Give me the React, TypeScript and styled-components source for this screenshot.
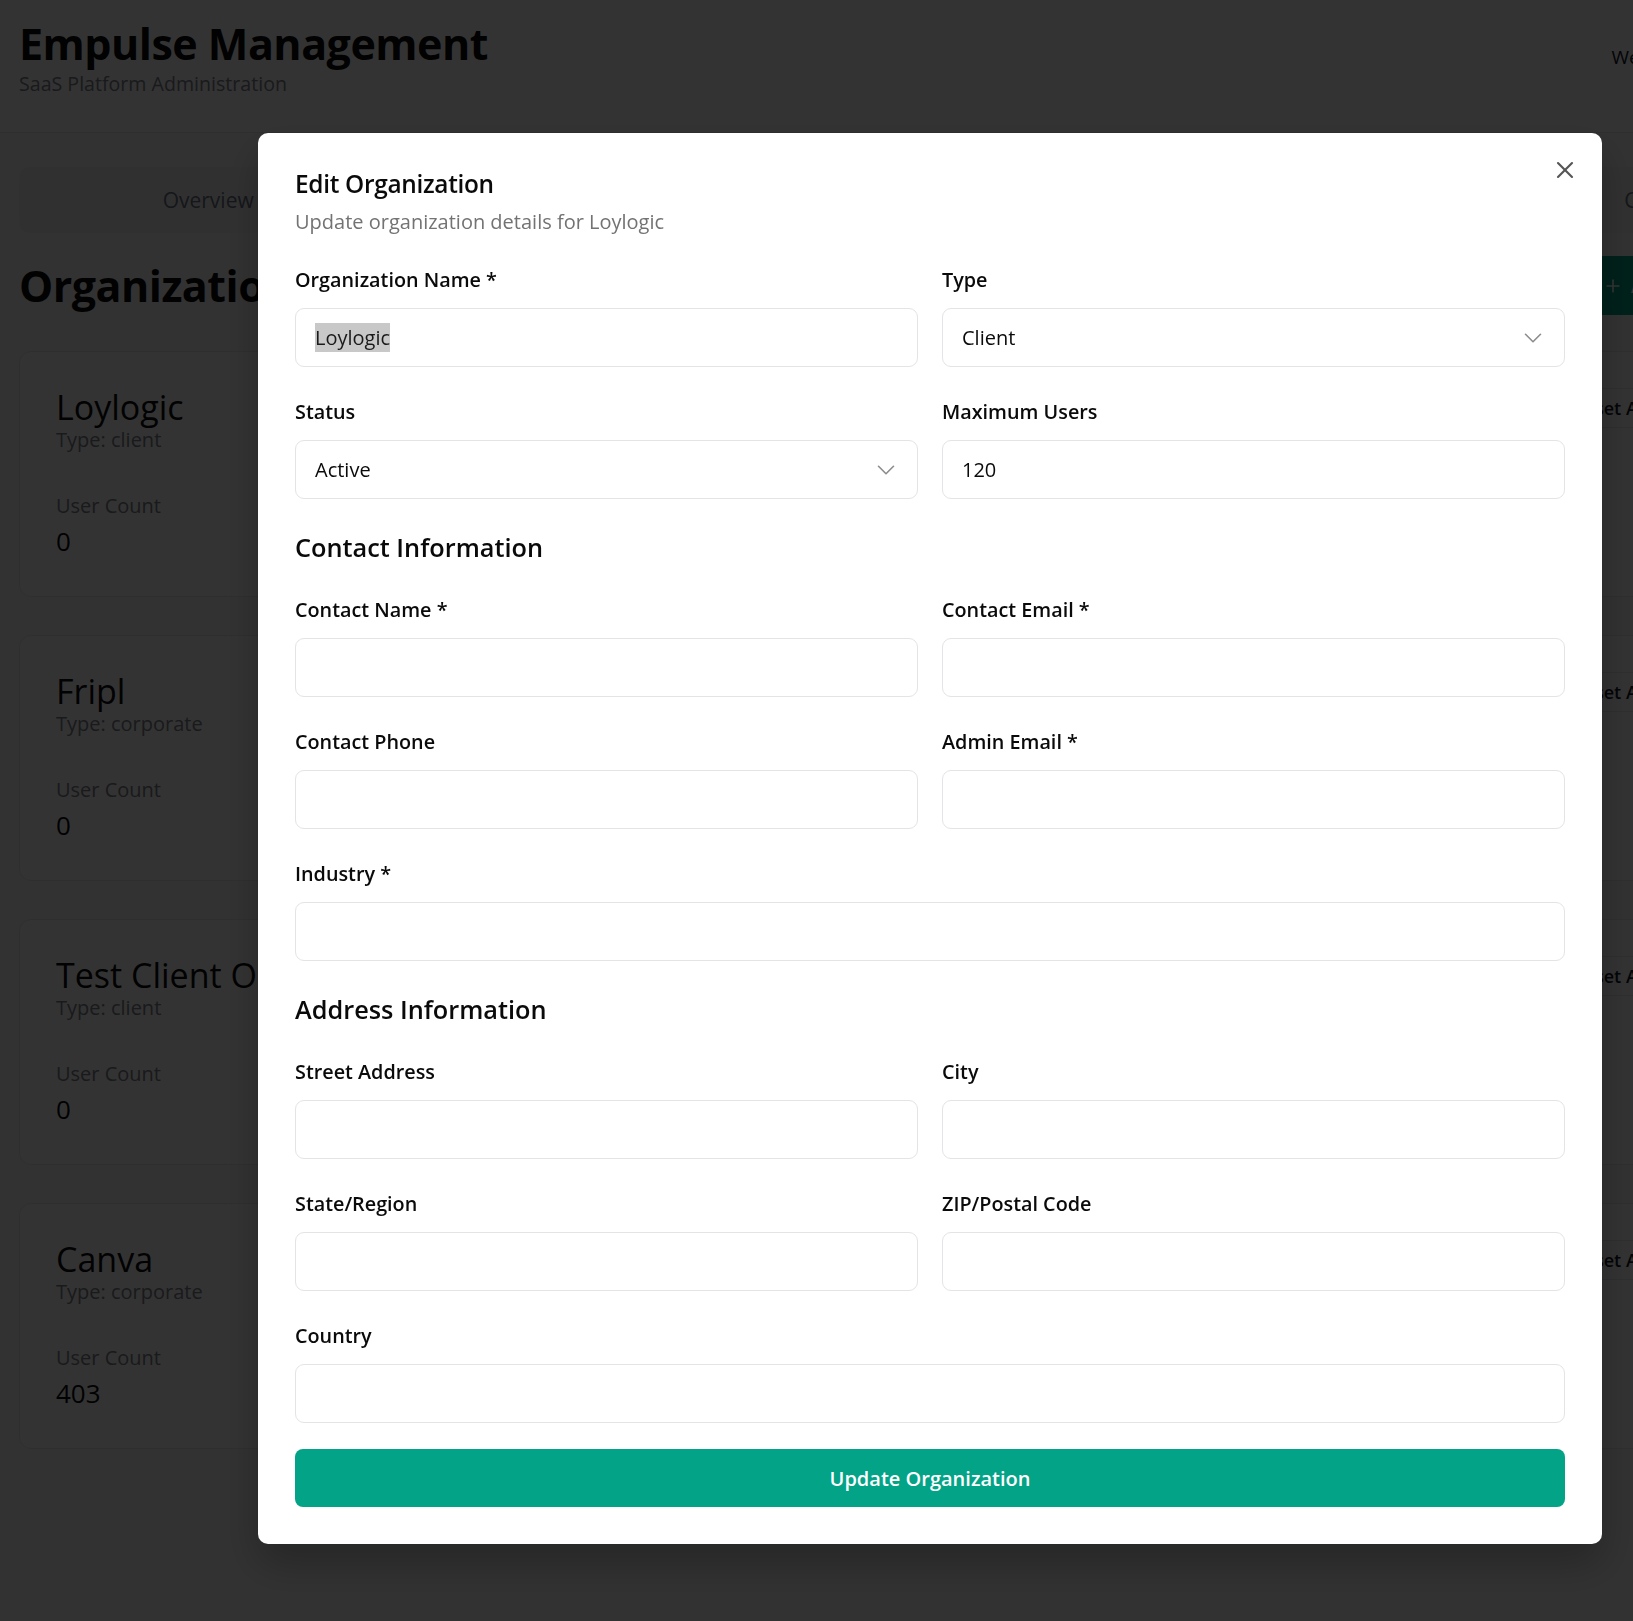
import styled, { createGlobalStyle } from "styled-components";
import { X, ChevronDown, Plus, KeyRound, Pencil } from "lucide-react";

const GlobalStyle = createGlobalStyle`
  html, body {
    margin: 0;
    padding: 0;
  }
  body {
    width: 1633px;
    height: 1621px;
    overflow: hidden;
    background: #ffffff;
    font-family: "Open Sans", "Noto Sans", sans-serif;
    color: #0a0a0a;
  }
  * {
    box-sizing: border-box;
  }
`;

/* ---------- page behind the dialog ---------- */

const Page = styled.div`
  width: 1890px;
  min-height: 1621px;
  background: #f9fafb;
`;

const Header = styled.header`
  height: 133px;
  background: #ffffff;
  border-bottom: 1px solid #e5e7eb;
  display: flex;
  justify-content: space-between;
  align-items: flex-start;
  padding: 20px 19px 0;
`;

const Brand = styled.div`
  display: flex;
  flex-direction: column;
  gap: 2px;
`;

const BrandTitle = styled.h1`
  margin: 0;
  font-size: 43px;
  line-height: 48px;
  font-weight: 700;
  letter-spacing: -0.5px;
  color: #0a0a0a;
`;

const BrandSub = styled.p`
  margin: 0;
  font-size: 19.6px;
  line-height: 28px;
  color: #7d828b;
`;

const UserArea = styled.div`
  display: flex;
  align-items: center;
  gap: 16px;
  padding-top: 17px;
  font-size: 19px;
  color: #111827;
`;

const GhostButton = styled.button<{ $icon?: boolean }>`
  height: 40px;
  padding: ${(p) => (p.$icon ? "0 10px" : "0 16px")};
  border: 1px solid #e5e7eb;
  border-radius: 8px;
  background: #ffffff;
  font-family: inherit;
  font-size: 18px;
  font-weight: 600;
  color: #111827;
  display: inline-flex;
  align-items: center;
  gap: 8px;
`;

const Main = styled.main`
  padding: 34px 19px 40px;
  display: flex;
  flex-direction: column;
`;

const TabList = styled.div`
  height: 66px;
  padding: 5px;
  border-radius: 10px;
  background: #f1f1f3;
  display: grid;
  grid-template-columns: repeat(5, 1fr);
`;

const Tab = styled.div<{ $active?: boolean }>`
  display: flex;
  align-items: center;
  justify-content: center;
  border-radius: 8px;
  font-size: 21px;
  color: ${(p) => (p.$active ? "#0a0a0a" : "#6b7280")};
  background: ${(p) => (p.$active ? "#ffffff" : "transparent")};
`;

const SectionHead = styled.div`
  margin-top: 23px;
  height: 59px;
  display: flex;
  align-items: center;
  justify-content: space-between;
`;

const PageTitle = styled.h2`
  margin: 0;
  font-size: 43px;
  font-weight: 700;
  letter-spacing: -0.5px;
`;

const PrimaryButton = styled.button`
  height: 59px;
  padding: 0 34px 0 26px;
  border: none;
  border-radius: 8px;
  background: #02a386;
  color: #ffffff;
  font-family: inherit;
  font-size: 19px;
  font-weight: 600;
  display: inline-flex;
  align-items: center;
  gap: 8px;
`;

const CardList = styled.div`
  margin-top: 36px;
  display: flex;
  flex-direction: column;
  gap: 38px;
`;

const Card = styled.div`
  height: 246px;
  padding: 36px 36px 0;
  background: #ffffff;
  border: 1px solid #e5e7eb;
  border-radius: 12px;
  display: flex;
  flex-direction: column;
`;

const CardTop = styled.div`
  display: flex;
  justify-content: space-between;
  align-items: flex-start;
`;

const OrgName = styled.div`
  font-size: 34px;
  line-height: 38px;
  color: #0a0a0a;
`;

const Muted = styled.div`
  font-size: 20px;
  line-height: 28px;
  color: #7d828b;
`;

const Actions = styled.div`
  display: flex;
  gap: 8px;
`;

const Stat = styled.div`
  margin-top: 38px;
  display: flex;
  flex-direction: column;
  gap: 4px;
`;

const StatValue = styled.div`
  font-size: 26px;
  line-height: 34px;
`;

/* ---------- dialog ---------- */

const Overlay = styled.div`
  position: fixed;
  inset: 0;
  background: rgba(0, 0, 0, 0.8);
`;

const Dialog = styled.div`
  position: fixed;
  left: 258px;
  top: 133px;
  width: 1344px;
  padding: 36px 37px 37px;
  background: #ffffff;
  border-radius: 10px;
  box-shadow: 0 20px 40px rgba(0, 0, 0, 0.25);
`;

const CloseButton = styled.button`
  position: absolute;
  top: 23px;
  right: 23px;
  width: 28px;
  height: 28px;
  padding: 0;
  border: none;
  background: none;
  color: #555555;
  display: flex;
`;

const DialogHeader = styled.div`
  display: flex;
  flex-direction: column;
  gap: 9px;
`;

const DialogTitle = styled.h2`
  margin: 0;
  font-size: 24.4px;
  line-height: 30px;
  font-weight: 600;
  letter-spacing: -0.3px;
  color: #0a0a0a;
`;

const DialogDesc = styled.p`
  margin: 0;
  font-size: 20px;
  line-height: 28px;
  color: #737373;
`;

const Form = styled.form`
  margin-top: 30px;
  display: flex;
  flex-direction: column;
  gap: 31px;
`;

const FieldGrid = styled.div`
  display: grid;
  grid-template-columns: 1fr 1fr;
  column-gap: 24px;
  row-gap: 31px;
`;

const Field = styled.div<{ $wide?: boolean }>`
  display: flex;
  flex-direction: column;
  gap: 14px;
  grid-column: ${(p) => (p.$wide ? "1 / -1" : "auto")};
`;

const Label = styled.label`
  font-size: 19.8px;
  line-height: 28px;
  font-weight: 600;
  color: #0a0a0a;
`;

const GroupTitle = styled.h3`
  margin: 0;
  font-size: 25.3px;
  line-height: 35px;
  font-weight: 600;
  color: #0a0a0a;
`;

const Input = styled.input`
  height: 59px;
  width: 100%;
  padding: 0 16px 0 19px;
  border: 1px solid #e4e4e7;
  border-radius: 9px;
  background: #ffffff;
  font-family: inherit;
  font-size: 20px;
  color: #0a0a0a;
  outline: none;
`;

const TextBox = styled.div`
  height: 59px;
  padding: 0 16px 0 19px;
  border: 1px solid #e4e4e7;
  border-radius: 9px;
  display: flex;
  align-items: center;
  font-size: 20px;
  color: #0a0a0a;
`;

const Selected = styled.span`
  background: #c8c8c8;
  color: #1a1a1a;
  line-height: 29px;
`;

const SelectBox = styled(TextBox)`
  justify-content: space-between;
  svg {
    color: #8d8d8d;
    flex-shrink: 0;
  }
`;

const SubmitButton = styled.button`
  margin-top: 26px;
  width: 100%;
  height: 58px;
  border: none;
  border-radius: 8px;
  background: #02a386;
  color: #ffffff;
  font-family: inherit;
  font-size: 20px;
  font-weight: 600;
`;

const orgs = [
  { name: "Loylogic", type: "client", users: 0 },
  { name: "Fripl", type: "corporate", users: 0 },
  { name: "Test Client Organization", type: "client", users: 0 },
  { name: "Canva", type: "corporate", users: 403 },
];

const tabs = ["Overview", "Organizations", "Users", "Billing", "Compliance"];

function TextField({ label, value, wide }: { label: string; value?: string; wide?: boolean }) {
  return (
    <Field $wide={wide}>
      <Label>{label}</Label>
      <Input defaultValue={value ?? ""} />
    </Field>
  );
}

function SelectField({ label, value }: { label: string; value: string }) {
  return (
    <Field>
      <Label>{label}</Label>
      <SelectBox>
        {value}
        <ChevronDown size={30} strokeWidth={1.3} />
      </SelectBox>
    </Field>
  );
}

function App() {
  return (
    <>
      <GlobalStyle />
      <Page>
        <Header>
          <Brand>
            <BrandTitle>Empulse Management</BrandTitle>
            <BrandSub>SaaS Platform Administration</BrandSub>
          </Brand>
          <UserArea>
            <span>Welcome, Admin</span>
            <GhostButton>Logout</GhostButton>
          </UserArea>
        </Header>
        <Main>
          <TabList>
            {tabs.map((t) => (
              <Tab key={t} $active={t === "Organizations"}>
                {t}
              </Tab>
            ))}
          </TabList>
          <SectionHead>
            <PageTitle>Organizations</PageTitle>
            <PrimaryButton>
              <Plus size={20} />
              Add New Organization
            </PrimaryButton>
          </SectionHead>
          <CardList>
            {orgs.map((o) => (
              <Card key={o.name}>
                <CardTop>
                  <div>
                    <OrgName>{o.name}</OrgName>
                    <Muted>Type: {o.type}</Muted>
                  </div>
                  <Actions>
                    <GhostButton>
                      <KeyRound size={16} />
                      Reset Admin Password
                    </GhostButton>
                    <GhostButton $icon>
                      <Pencil size={16} />
                    </GhostButton>
                  </Actions>
                </CardTop>
                <Stat>
                  <Muted>User Count</Muted>
                  <StatValue>{o.users}</StatValue>
                </Stat>
              </Card>
            ))}
          </CardList>
        </Main>
      </Page>

      <Overlay />
      <Dialog>
        <CloseButton aria-label="Close">
          <X size={28} strokeWidth={1.8} />
        </CloseButton>
        <DialogHeader>
          <DialogTitle>Edit Organization</DialogTitle>
          <DialogDesc>Update organization details for Loylogic</DialogDesc>
        </DialogHeader>
        <Form>
          <FieldGrid>
            <Field>
              <Label>Organization Name *</Label>
              <TextBox>
                <Selected>Loylogic</Selected>
              </TextBox>
            </Field>
            <SelectField label="Type" value="Client" />
            <SelectField label="Status" value="Active" />
            <TextField label="Maximum Users" value="120" />
          </FieldGrid>

          <GroupTitle>Contact Information</GroupTitle>
          <FieldGrid>
            <TextField label="Contact Name *" />
            <TextField label="Contact Email *" />
            <TextField label="Contact Phone" />
            <TextField label="Admin Email *" />
            <TextField label="Industry *" wide />
          </FieldGrid>

          <GroupTitle>Address Information</GroupTitle>
          <FieldGrid>
            <TextField label="Street Address" />
            <TextField label="City" />
            <TextField label="State/Region" />
            <TextField label="ZIP/Postal Code" />
            <TextField label="Country" wide />
          </FieldGrid>
        </Form>
        <SubmitButton>Update Organization</SubmitButton>
      </Dialog>
    </>
  );
}

export default App;
